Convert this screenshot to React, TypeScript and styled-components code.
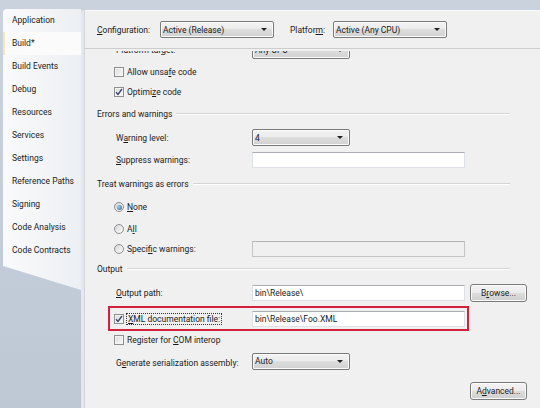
import React from 'react'
import styled, { createGlobalStyle, css } from 'styled-components'

const GlobalStyle = createGlobalStyle`
  html, body {
    margin: 0;
    padding: 0;
  }
  body {
    width: 540px;
    height: 408px;
    overflow: hidden;
    font-family: Roboto, "Liberation Sans", sans-serif;
    font-size: 8.5px;
    color: #1b1b1b;
  }
`

const Window = styled.div`
  display: flex;
  width: 540px;
  height: 408px;
  box-sizing: border-box;
  padding-top: 9px;
  background: linear-gradient(#cad2dd, #bec8d5);
  overflow: hidden;
`

const Sidebar = styled.nav`
  flex: none;
  display: flex;
  flex-direction: column;
  width: 78px;
  height: 281px;
  margin-left: 3px;
  background: linear-gradient(to right, #f9fafb, #eceff3);
  border-top-left-radius: 4px;
  clip-path: polygon(0 0, 100% 0, 100% 100%, 0 257px);
`

const Tab = styled.div<{ $active?: boolean }>`
  height: 23px;
  line-height: 23px;
  padding-left: 7px;
  border-left: 2px solid transparent;
  white-space: nowrap;
  ${({ $active }) =>
    $active &&
    css`
      border-left-color: #f3e8bf;
      background: #fbfbfb;
    `}
`

const Panel = styled.main`
  flex: 1;
  display: flex;
  flex-direction: column;
  margin-top: 1px;
  background: #f0f0f0;
  border-left: 3px solid #e4e8ed;
  box-shadow: inset 1px 0 #d3d7dc, inset 0 1px #fafafa;
  border-top-left-radius: 3px;
  overflow: hidden;
`

const ConfigBar = styled.div`
  flex: none;
  display: flex;
  align-items: center;
  height: 39px;
  box-sizing: border-box;
  padding: 1px 0 0 13px;
  border-bottom: 1px solid #cdcdcd;
`

const BarLabel = styled.span<{ $w: number }>`
  width: ${({ $w }) => $w}px;
  flex: none;
  white-space: nowrap;
`

const ScrollArea = styled.div`
  flex: 1;
  overflow: hidden;
  margin-top: 2px;
`

// content is scrolled down a little: the first row is mostly hidden
const ScrollContent = styled.div`
  margin-top: -12px;
  padding-left: 13px;
`

const Row = styled.div<{ $h: number; $indent?: number }>`
  display: flex;
  align-items: center;
  height: ${({ $h }) => $h}px;
  padding-left: ${({ $indent = 0 }) => $indent}px;
  white-space: nowrap;
`

const GroupHeader = styled.div<{ $h: number }>`
  display: flex;
  align-items: center;
  height: ${({ $h }) => $h}px;
  margin-right: 30px;
  white-space: nowrap;

  &::after {
    content: '';
    flex: 1;
    margin-left: 4px;
    border-top: 1px solid #d5d5d5;
    border-bottom: 1px solid #ffffff;
  }
`

const FieldLabel = styled.span<{ $nudge?: number }>`
  width: 136px;
  flex: none;
  margin-top: ${({ $nudge = 0 }) => $nudge}px;
`

const Key = styled.span`
  text-decoration: underline;
`

const CheckItem = styled.span<{ $w?: number }>`
  display: flex;
  align-items: center;
  gap: 3px;
  flex: none;
  ${({ $w }) => $w && `width: ${$w}px;`}
`

const Box = styled.span`
  display: flex;
  align-items: center;
  justify-content: center;
  width: 10px;
  height: 10px;
  box-sizing: border-box;
  border: 1px solid #8e8f8f;
  background: linear-gradient(135deg, #d9d9d9, #fbfbfb);
  box-shadow: inset 0 0 0 1px #f4f4f4;
`

const Round = styled.span<{ $on?: boolean }>`
  display: flex;
  align-items: center;
  justify-content: center;
  width: 10px;
  height: 10px;
  box-sizing: border-box;
  border: 1px solid #8e8f8f;
  border-radius: 50%;
  background: linear-gradient(135deg, #d6d6d6, #fbfbfb);

  &::after {
    content: '';
    display: ${({ $on }) => ($on ? 'block' : 'none')};
    width: 5px;
    height: 5px;
    border-radius: 50%;
    background: radial-gradient(circle at 35% 35%, #9fd0f0, #2a5a8f);
  }
`

const Focused = styled.span`
  outline: 1px dotted #333;
  outline-offset: 0;
  padding: 0 1px;
`

const TextBox = styled.div<{ $disabled?: boolean; $w?: number }>`
  width: ${({ $w = 213 }) => $w}px;
  height: 16px;
  box-sizing: border-box;
  padding-left: 2px;
  line-height: 14px;
  flex: none;
  background: ${({ $disabled }) => ($disabled ? '#f0f0f0' : '#ffffff')};
  border: 1px solid ${({ $disabled }) => ($disabled ? '#c4c4c4' : '#dde1e6')};
  border-top-color: ${({ $disabled }) => ($disabled ? '#b5b5b5' : '#abadb3')};
`

const Combo = styled.div<{ $w: number }>`
  display: flex;
  align-items: center;
  justify-content: space-between;
  flex: none;
  width: ${({ $w }) => $w}px;
  height: 17px;
  box-sizing: border-box;
  padding: 0 6px 0 2px;
  border: 1px solid #7a7a7a;
  border-radius: 2px;
  background: linear-gradient(#f3f3f3 0%, #ebebeb 49%, #dddddd 50%, #d1d1d1 100%);
  box-shadow: inset 0 0 0 1px #fafafa;

  &::after {
    content: '';
    border-left: 3px solid transparent;
    border-right: 3px solid transparent;
    border-top: 3px solid #222;
  }
`

const Button = styled.div`
  display: flex;
  align-items: center;
  justify-content: center;
  flex: none;
  width: 57px;
  height: 18px;
  box-sizing: border-box;
  border: 1px solid #7a7a7a;
  border-radius: 3px;
  background: linear-gradient(#f3f3f3 0%, #ebebeb 49%, #dddddd 50%, #cfcfcf 100%);
  box-shadow: inset 0 0 0 1px #fbfbfb;
`

const Highlight = styled.div`
  display: flex;
  align-items: center;
  width: 361px;
  height: 25px;
  box-sizing: border-box;
  margin-left: 11px;
  padding-left: 4px;
  border: 2px solid #d3203b;
`

const Gap = styled.span<{ $w: number }>`
  width: ${({ $w }) => $w}px;
  flex: none;
`

const Footer = styled.div`
  display: flex;
  align-items: center;
  justify-content: flex-end;
  height: 34px;
  padding-right: 13px;
`

function Tick() {
  return (
    <svg width="8" height="8" viewBox="0 0 8 8">
      <path d="M1 4.2 L3 6.5 L7 1" fill="none" stroke="#3b4a70" strokeWidth="1.4" />
    </svg>
  )
}

function CheckBox({ checked }: { checked?: boolean }) {
  return <Box>{checked && <Tick />}</Box>
}

const tabs = [
  'Application',
  'Build*',
  'Build Events',
  'Debug',
  'Resources',
  'Services',
  'Settings',
  'Reference Paths',
  'Signing',
  'Code Analysis',
  'Code Contracts',
]

export default function App() {
  return (
    <>
      <GlobalStyle />
      <Window>
        <Sidebar>
          {tabs.map((t) => (
            <Tab key={t} $active={t === 'Build*'}>
              {t}
            </Tab>
          ))}
        </Sidebar>

        <Panel>
          <ConfigBar>
            <BarLabel $w={63}>
              <Key>C</Key>onfiguration:
            </BarLabel>
            <Combo $w={114}>Active (Release)</Combo>
            <Gap $w={16} />
            <BarLabel $w={43}>
              Platfor<Key>m</Key>:
            </BarLabel>
            <Combo $w={114}>Active (Any CPU)</Combo>
          </ConfigBar>

          <ScrollArea>
            <ScrollContent>
              <Row $h={22} $indent={19}>
                <FieldLabel>
                  Platform tar<Key>g</Key>et:
                </FieldLabel>
                <Combo $w={98}>Any CPU</Combo>
              </Row>
              <Row $h={21} $indent={17}>
                <CheckItem>
                  <CheckBox />
                  <span>
                    Allow unsa<Key>f</Key>e code
                  </span>
                </CheckItem>
              </Row>
              <Row $h={19} $indent={17}>
                <CheckItem>
                  <CheckBox checked />
                  <span>
                    Optimi<Key>z</Key>e code
                  </span>
                </CheckItem>
              </Row>

              <GroupHeader $h={26}>Errors and warnings</GroupHeader>
              <Row $h={21} $indent={19}>
                <FieldLabel>
                  W<Key>a</Key>rning level:
                </FieldLabel>
                <Combo $w={98}>4</Combo>
              </Row>
              <Row $h={24} $indent={19}>
                <FieldLabel>
                  <Key>S</Key>uppress warnings:
                </FieldLabel>
                <TextBox />
              </Row>

              <GroupHeader $h={24}>Treat warnings as errors</GroupHeader>
              <Row $h={22} $indent={17}>
                <CheckItem>
                  <Round $on />
                  <span>
                    <Key>N</Key>one
                  </span>
                </CheckItem>
              </Row>
              <Row $h={21} $indent={17}>
                <CheckItem>
                  <Round />
                  <span>
                    A<Key>l</Key>l
                  </span>
                </CheckItem>
              </Row>
              <Row $h={19} $indent={17}>
                <CheckItem $w={138}>
                  <Round />
                  <span>
                    Speci<Key>f</Key>ic warnings:
                  </span>
                </CheckItem>
                <TextBox $disabled />
              </Row>

              <GroupHeader $h={22}>Output</GroupHeader>
              <Row $h={26} $indent={19}>
                <FieldLabel>
                  <Key>O</Key>utput path:
                </FieldLabel>
                <TextBox>bin\Release\</TextBox>
                <Gap $w={5} />
                <Button>
                  B<Key>r</Key>owse...
                </Button>
              </Row>
              <Highlight>
                <CheckItem $w={138}>
                  <CheckBox checked />
                  <Focused>
                    <Key>X</Key>ML documentation file:
                  </Focused>
                </CheckItem>
                <TextBox>bin\Release\Foo.XML</TextBox>
              </Highlight>
              <Row $h={17} $indent={17}>
                <CheckItem>
                  <CheckBox />
                  <span>
                    Register for <Key>C</Key>OM interop
                  </span>
                </CheckItem>
              </Row>
              <Row $h={26} $indent={19}>
                <FieldLabel $nudge={4}>
                  G<Key>e</Key>nerate serialization assembly:
                </FieldLabel>
                <Combo $w={98}>Auto</Combo>
              </Row>
              <Footer>
                <Button>
                  A<Key>d</Key>vanced...
                </Button>
              </Footer>
            </ScrollContent>
          </ScrollArea>
        </Panel>
      </Window>
    </>
  )
}
